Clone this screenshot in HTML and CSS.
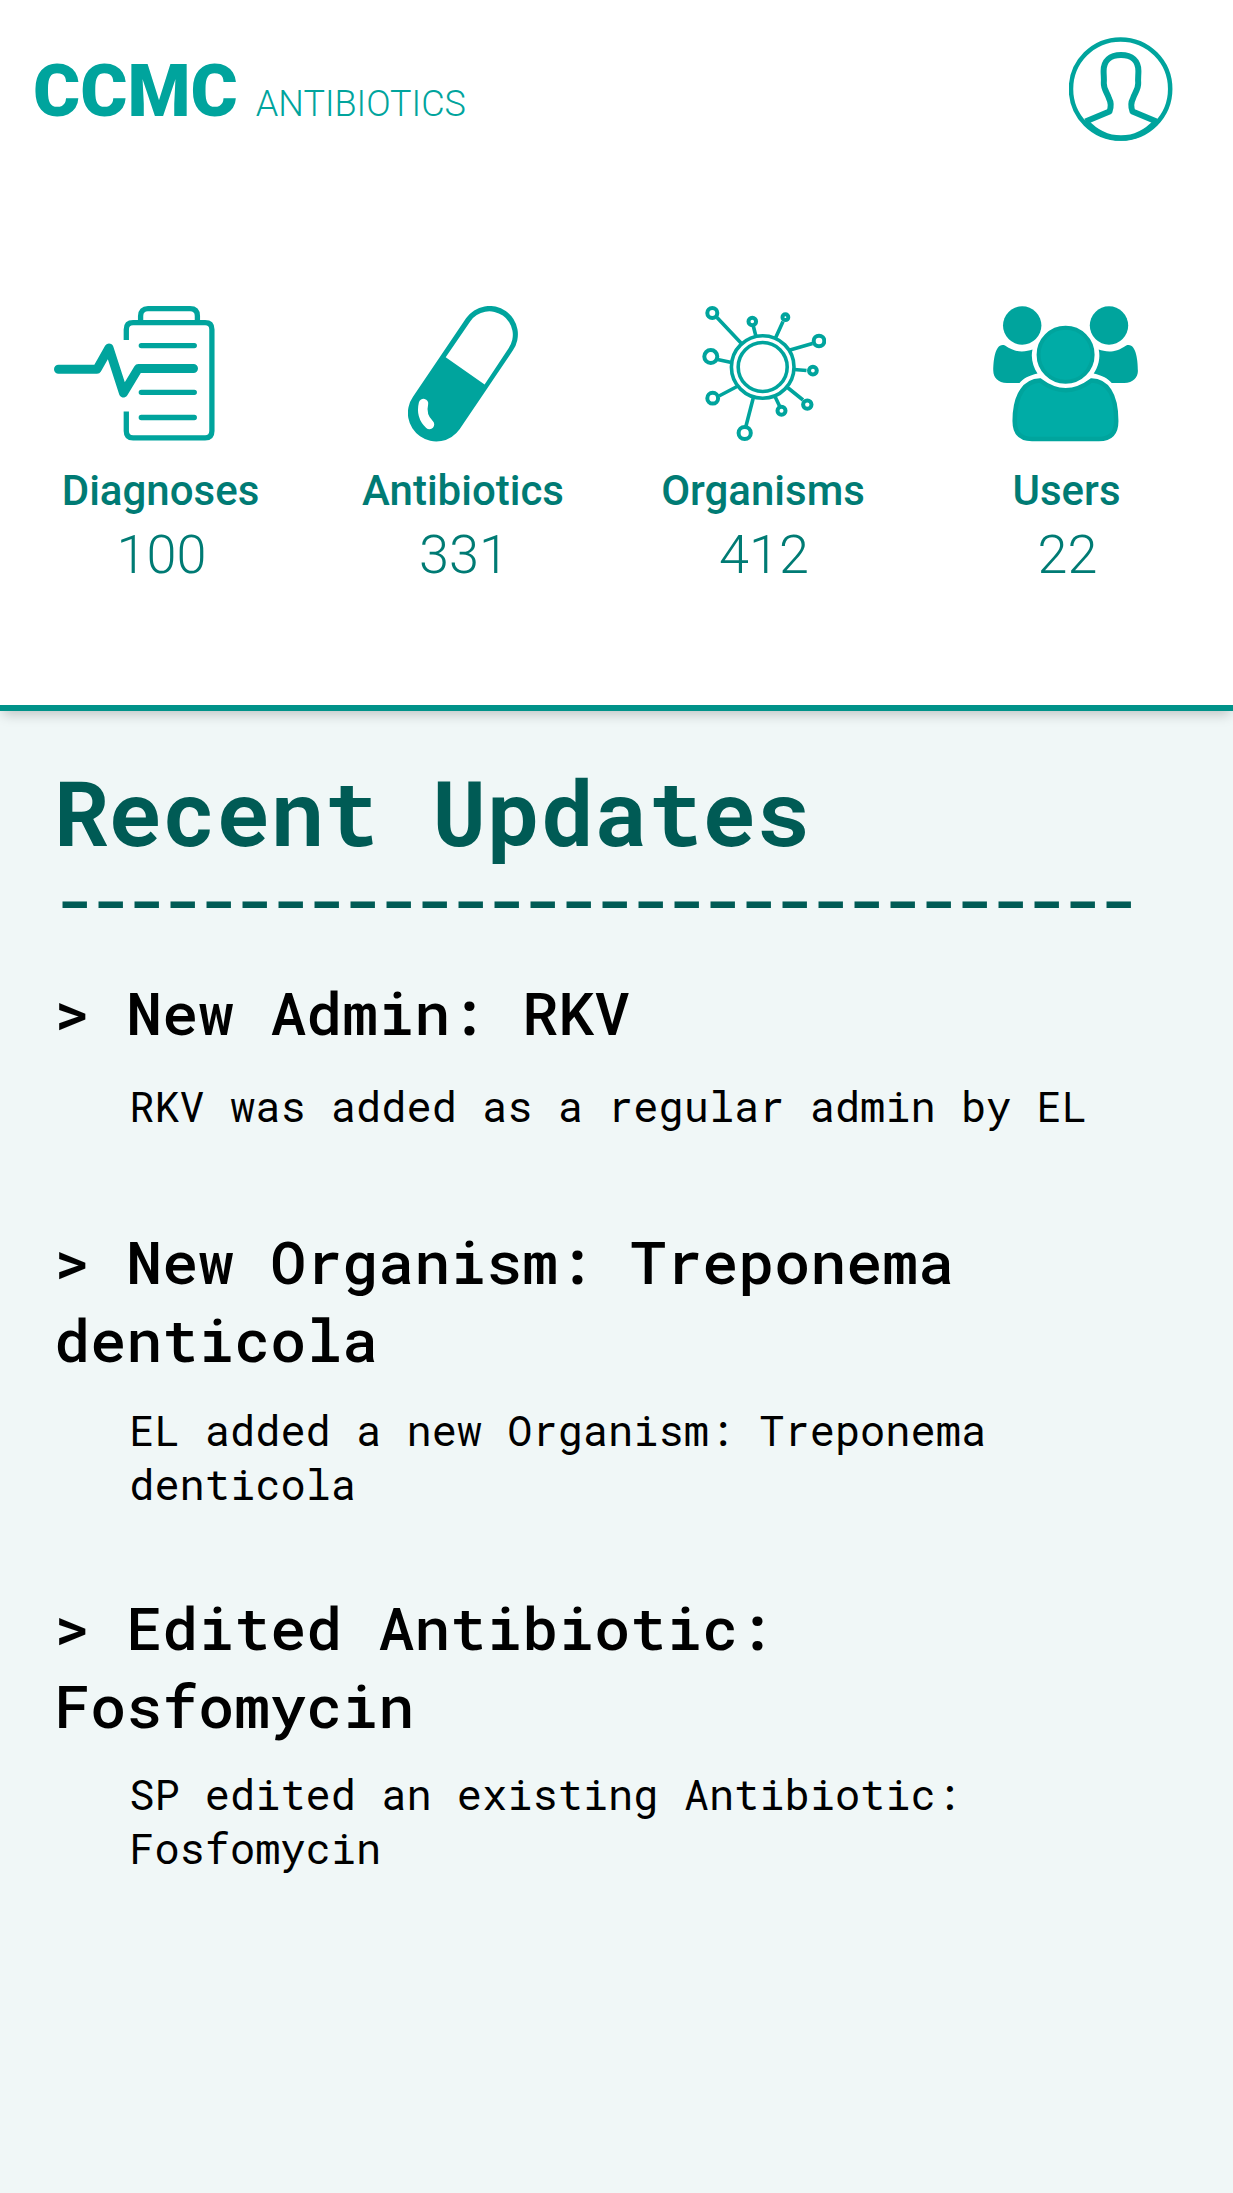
FILE: index.html
```
<!DOCTYPE html>
<html lang="en"><head><meta charset="utf-8"><title>CCMC Antibiotics</title><link rel="stylesheet" href="styles.css"></head>
<body>
<header class="top">
  <div class="bar">
    <h1 class="brand"><span class="brand-name">CCMC</span><span class="brand-sub">ANTIBIOTICS</span></h1>
    <svg class="avatar" viewBox="0 0 104 104" fill="none" stroke="#00a49d">
      <circle cx="51.600" cy="52" r="49.6" stroke-width="4.5"/>
      <path d="M16.500 84.500L40.500 74.500C42.500 69 42.500 66 40 61.500C38.500 56 34.500 52.500 34.800 46C35.200 43 34.600 38 34.600 34C34.600 24 41 18 52 18C63 18 69.400 24 69.400 34C69.400 38 68.800 43 69.200 46C69.500 52.500 65.500 56 64 61.500C61.500 66 61.500 69 63.500 74.500L87.500 84.500" stroke-width="6" stroke-linejoin="round"/>
      <path d="M17 84.500Q32 101 52 101Q72 101 87 84.500" stroke-width="5.500"/>
    </svg>
  </div>
  <nav class="stats">
    <a class="stat">
      <svg class="icon icon-diagnoses" width="162" height="136" viewBox="0 0 162 136" fill="none" stroke="#00a49d" stroke-width="5.300">
        <path d="M72.300 34V23.500Q72.300 16.700 79.100 16.700H151.100Q157.900 16.700 157.900 23.500V125Q157.900 131.900 151.100 131.900H79.100Q72.300 131.900 72.300 125V105.500"/>
        <path d="M86.600 16V10Q86.600 2.700 94 2.700H136Q143.400 2.700 143.400 10V16"/>
        <path d="M87.300 39.600H140.300M87.300 86.300H140.300M87.300 111.500H140.300" stroke-linecap="round"/>
        <path d="M4.500 63.300H43L55 42L69.500 87L84.300 62.500H139.500" stroke-width="9" stroke-linecap="round" stroke-linejoin="round"/>
      </svg>
      <span class="label">Diagnoses</span><span class="count">100</span>
    </a>
    <a class="stat">
      <svg class="icon" width="110" height="136" viewBox="0 0 110 136">
        <path fill="#00a49d" fill-rule="evenodd" d="M58.200 12.100A28.400 28.400 0 1 1 104.800 44.600L51.600 123.300A28.400 28.400 0 1 1 5 90.800ZM62.200 15.400L37.700 51.200L76.600 78.400L100.600 42.200A23.300 23.300 0 1 0 62.200 15.400Z"/>
        <path d="M15.500 97.500Q12.500 110 21.500 118.500" fill="none" stroke="#fff" stroke-width="9.500" stroke-linecap="round"/>
      </svg>
      <span class="label">Antibiotics</span><span class="count">331</span>
    </a>
    <a class="stat">
      <svg class="icon icon-organisms" width="124" height="136" viewBox="0 0 124 136" fill="none" stroke="#00a49d" stroke-width="3.600">
        <circle cx="60.700" cy="61" r="31.300"/><circle cx="60.700" cy="61" r="24.500"/>
        <path d="M15 11.500L39 37M51.300 20L54 30.500M81 15.500L73.500 32M110.500 37.500L88 44M104.500 64.500L92 63.500M101 94L85.500 81.500M77.500 100L73 90.500M44 120L51.500 91M17 90L36 80M15.500 53.500L29.500 56.500"/>
        <g stroke-width="4"><circle cx="10.300" cy="7" r="5"/><circle cx="50.300" cy="15.500" r="3.800"/><circle cx="83.400" cy="11.200" r="2.900"/><circle cx="117" cy="35" r="5.300"/><circle cx="110.900" cy="64.600" r="3.900"/><circle cx="105.300" cy="98.600" r="4.200"/><circle cx="79.500" cy="104.700" r="4"/><circle cx="42.700" cy="127" r="6.100"/><circle cx="10.700" cy="92.200" r="5.400"/><circle cx="8.800" cy="50.600" r="6.500"/></g>
      </svg>
      <span class="label">Organisms</span><span class="count">412</span>
    </a>
    <a class="stat">
      <svg class="icon icon-users" width="146" height="136" viewBox="0 0 146 136" fill="#00a49d">
        <circle cx="29.200" cy="19.500" r="19.200"/><circle cx="116" cy="19.500" r="19.200"/>
        <path id="side" d="M12 39.500C24 48 33 45.500 39.500 43.500C37.500 52 40 61 44.500 67.500C36 69.500 30 72.500 26.500 77H14C5 77 .3 71 .3 65C.3 55 2 36 12 39.500Z"/>
        <use href="#side" transform="matrix(-1 0 0 1 145.200 0)"/>
        <circle cx="72.600" cy="48.700" r="27" fill="#00aca6" stroke="#00a49d" stroke-width="4"/>
        <path d="M47 74.500Q72.600 94 98.500 74.500C113 75 123.200 87 123.200 115Q123.200 133 106 133H39Q21.700 133 21.700 115C21.700 87 33 75 47 74.500Z" fill="#00aca6" stroke="#00a49d" stroke-width="4.500"/>
      </svg>
      <span class="label">Users</span><span class="count">22</span>
    </a>
  </nav>
</header>
<main class="updates">
  <h2 class="heading">Recent Updates</h2>
  <p class="rule">------------------------------</p>
  <article class="entry entry-admin"><h3 class="entry-title">&gt; New Admin: RKV</h3><p class="entry-text">RKV was added as a regular admin by EL</p></article>
  <article class="entry entry-organism"><h3 class="entry-title">&gt; New Organism: Treponema denticola</h3><p class="entry-text">EL added a new Organism: Treponema denticola</p></article>
  <article class="entry entry-antibiotic"><h3 class="entry-title">&gt; Edited Antibiotic: Fosfomycin</h3><p class="entry-text">SP edited an existing Antibiotic: Fosfomycin</p></article>
</main>
</body></html>
```
FILE: styles.css
```
* { box-sizing: border-box; }
body { margin: 0; min-height: 2193px; background: #f0f7f7; font-family: Roboto, sans-serif; }
h1, h2, h3, p { margin: 0; font-weight: 400; }
.top { height: 711px; background: #fff; border-bottom: 6px solid #009289; box-shadow: 0 6px 12px -3px rgba(0,0,0,.22); }
.bar { display: flex; justify-content: space-between; align-items: flex-start; padding: 36.5px 60.5px 0 33px; height: 306px; }
.brand { display: flex; align-items: baseline; gap: 18px; padding-top: 13.5px; color: #00a49d; line-height: 84px; }
.brand-name { font-size: 72px; font-weight: 900; }
.brand-sub { font-size: 36px; font-weight: 300; }
.avatar { width: 104px; height: 104px; }
.stats { display: grid; grid-template-columns: 301px 304px 296px 311px; margin-left: 10px; color: #007b74; }
.stat { display: flex; flex-direction: column; align-items: center; }
.icon { display: block; }
.icon-diagnoses { margin-right: 51px; }
.icon-organisms { margin-left: 1px; }
.icon-users { margin-right: 1px; }
.label { margin-top: 24px; font-size: 42px; font-weight: 500; line-height: 49px; }
.count { margin-top: 7.5px; padding-left: 2px; font-size: 54px; font-weight: 300; line-height: 63px; }
.updates { padding: 51px 84px 0 54.2px; font-family: "Roboto Mono", "Liberation Mono", monospace; color: #000; }
.heading { font-size: 90px; font-weight: 700; line-height: 98px; color: #005b55; }
.rule { font-size: 60px; font-weight: 700; line-height: 79px; color: #005b55; }
.entry { display: flex; flex-direction: column; }
.entry-title { font-size: 60px; font-weight: 500; line-height: 78px; }
.entry-text { padding-left: 75px; font-size: 42px; line-height: 54px; }
.entry-admin { margin-top: 34px; gap: 28px; }
.entry-organism { margin-top: 89px; gap: 25px; }
.entry-antibiotic { margin-top: 77px; gap: 23px; }
```
